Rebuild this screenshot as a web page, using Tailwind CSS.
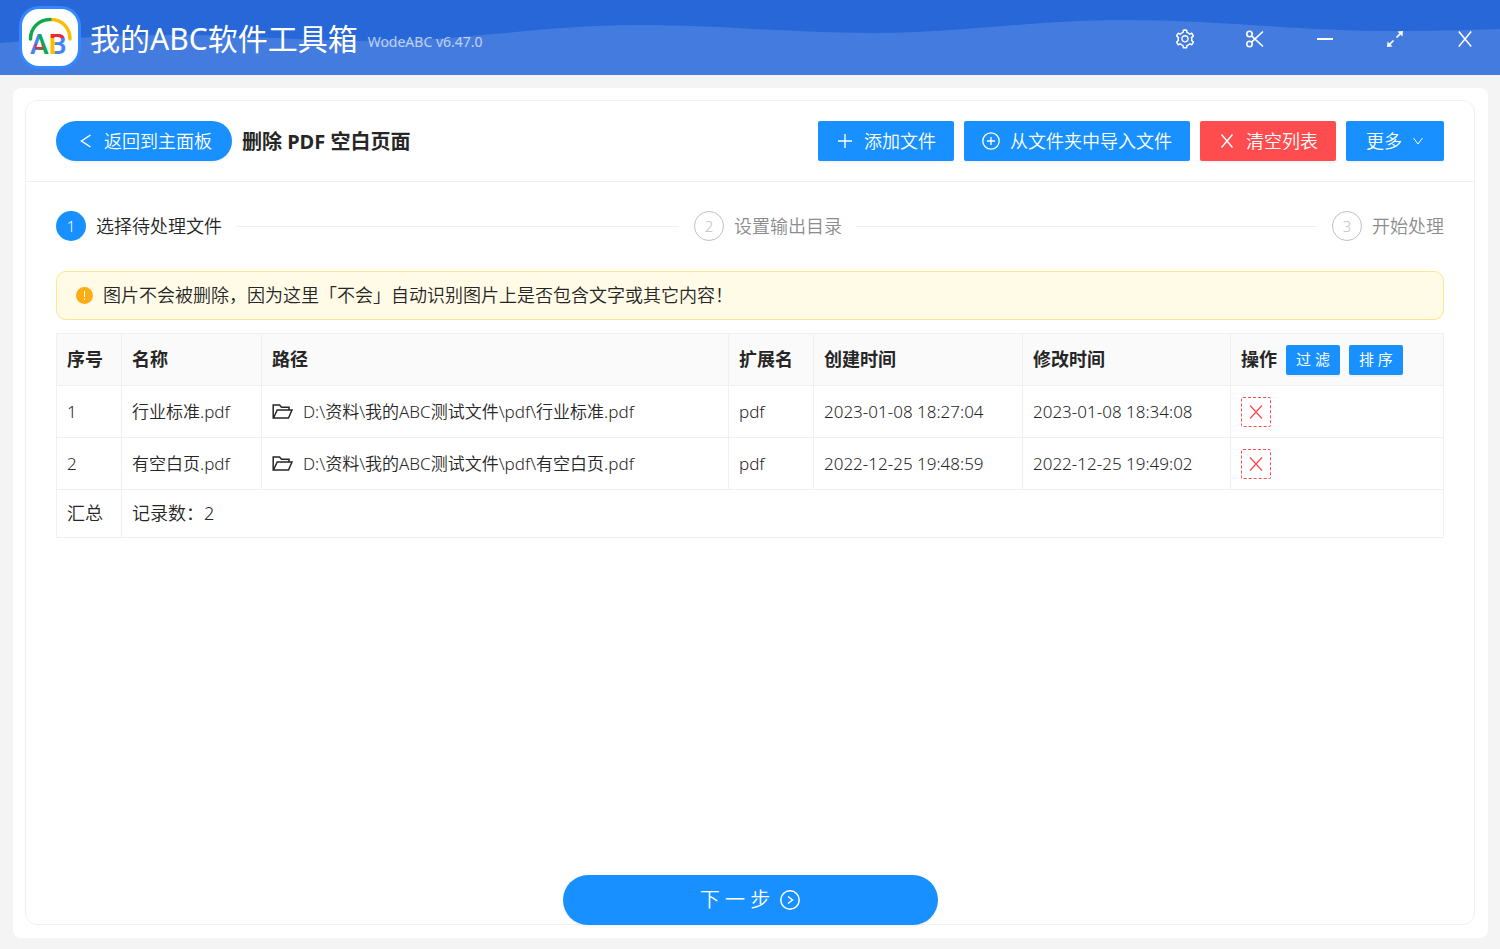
<!DOCTYPE html>
<html lang="zh-CN">
<head>
  <meta charset="UTF-8">
  <meta name="viewport" content="width=device-width, initial-scale=1.0">
  <title>我的ABC软件工具箱</title>
  <script src="https://cdn.jsdelivr.net/npm/@tailwindcss/browser@4"></script>
  <style>
    body { font-family: "Noto Sans", "Noto Sans CJK SC", sans-serif; }
  </style>
</head>
<body class="flex min-h-screen flex-col bg-[#f4f4f4] text-[17px] font-[350] text-[#262626]">

  <!-- Title bar -->
  <header class="relative flex h-[75px] items-center bg-[#2767d7] pl-[19px] text-white">
    <svg class="absolute inset-0 h-full w-full" viewBox="0 0 1500 75" preserveAspectRatio="none" aria-hidden="true">
      <path d="M0 43C70 38 110 35 170 35C250 35 300 41 370 41C470 41 540 25 637 25C720 25 790 33 873 33C960 33 1030 20 1125 20C1220 20 1300 31 1393 31C1430 31 1465 30 1500 29V75H0Z" fill="#447bde"/>
    </svg>
    <div class="relative flex flex-1 items-center">
      <svg class="h-[63px] w-[62px]" viewBox="0 0 62 63" aria-hidden="true">
        <defs>
          <pattern id="logoColors" width="62" height="63" patternUnits="userSpaceOnUse">
            <rect width="20" height="63" fill="#4285f4"/>
            <rect x="20" width="10" height="63" fill="#0aa84f"/>
            <rect x="16" y="38" width="8" height="5" fill="#ea2a33"/>
            <rect x="30" width="6" height="63" fill="#fbbc05"/>
            <rect x="36" width="26" height="63" fill="#4285f4"/>
            <rect x="30" width="32" height="32" fill="#ea2a33"/>
          </pattern>
        </defs>
        <rect width="62" height="63" rx="20" fill="#3388ff"/>
        <rect x="3" y="3" width="56" height="57" rx="17" fill="#fff"/>
        <g fill="none" stroke-width="3.500" stroke-linecap="round">
          <path d="M51 33C51 22 43 13.500 32 13.500" stroke="#fbbc05"/>
          <path d="M11.500 33C11.500 22 20 13.500 31 13.500" stroke="#0aa84f"/>
        </g>
        <text x="11" y="48" font-family="Roboto, sans-serif" font-size="28" font-weight="600" fill="url(#logoColors)">AB</text>
      </svg>
      <div class="flex items-center gap-[10px] pt-[3px] pl-[9px] font-normal">
        <h1 class="text-[30px] leading-10">我的ABC软件工具箱</h1>
        <span class="pt-1 text-[14px] text-white/65">WodeABC v6.47.0</span>
      </div>
    </div>
    <div class="relative flex h-full items-center pt-0.5">
      <button class="flex w-[70px] justify-center" aria-label="设置">
        <svg class="size-[22px]" viewBox="0 0 1024 1024" fill="currentColor"><path d="M924.800 625.700l-65.500-56c3.100-19 4.700-38.400 4.700-57.800s-1.600-38.800-4.700-57.800l65.500-56a32.030 32.030 0 009.300-35.200l-.9-2.600a443.740 443.740 0 00-79.700-137.900l-1.800-2.100a32.120 32.120 0 00-35.100-9.500l-81.300 28.900c-30-24.600-63.500-44-99.700-57.600l-15.700-85a32.050 32.050 0 00-25.800-25.700l-2.700-.5c-52.100-9.400-106.900-9.400-159 0l-2.700.5a32.050 32.050 0 00-25.800 25.700l-15.800 85.400a351.860 351.860 0 00-99 57.400l-81.900-29.100a32 32 0 00-35.100 9.500l-1.800 2.100a446.020 446.020 0 00-79.700 137.900l-.9 2.600c-4.500 12.500-.8 26.500 9.300 35.200l66.300 56.600c-3.100 18.800-4.600 38-4.600 57.100 0 19.200 1.500 38.400 4.600 57.100L99 625.500a32.030 32.030 0 00-9.300 35.200l.9 2.600c18.100 50.400 44.900 96.900 79.700 137.900l1.800 2.100a32.120 32.120 0 0035.100 9.500l81.900-29.100c29.800 24.500 63.100 43.900 99 57.400l15.800 85.400a32.050 32.050 0 0025.800 25.700l2.700.5a449.400 449.400 0 00159 0l2.700-.5a32.050 32.050 0 0025.800-25.700l15.700-85a350 350 0 0099.700-57.600l81.300 28.900a32 32 0 0035.100-9.500l1.800-2.100c34.800-41.100 61.600-87.500 79.700-137.900l.9-2.600c4.500-12.300.8-26.300-9.300-35zM788.300 465.900c2.500 15.100 3.800 30.600 3.800 46.100s-1.300 31-3.800 46.100l-6.600 40.100 74.700 63.900a370.030 370.030 0 01-42.600 73.600L721 702.800l-31.400 25.800c-23.900 19.600-50.500 35-79.300 45.800l-38.100 14.300-17.900 97a377.500 377.500 0 01-85 0l-17.900-97.200-37.800-14.500c-28.500-10.800-55-26.200-78.700-45.700l-31.400-25.900-93.400 33.200c-17-22.900-31.200-47.600-42.600-73.600l75.500-64.500-6.500-40c-2.400-14.900-3.700-30.300-3.700-45.500 0-15.300 1.200-30.600 3.700-45.500l6.500-40-75.500-64.500c11.300-26.100 25.600-50.700 42.600-73.600l93.400 33.200 31.400-25.900c23.700-19.500 50.200-34.900 78.700-45.700l37.900-14.300 17.900-97.200c28.100-3.200 56.800-3.200 85 0l17.900 97 38.100 14.300c28.700 10.800 55.400 26.200 79.300 45.800l31.400 25.800 92.800-32.900c17 22.900 31.200 47.600 42.600 73.600L781.800 426l6.500 39.900zM512 326c-97.200 0-176 78.800-176 176s78.800 176 176 176 176-78.800 176-176-78.800-176-176-176zm79.200 255.200A111.600 111.600 0 01512 614c-29.900 0-58-11.700-79.200-32.800A111.600 111.600 0 01400 502c0-29.900 11.700-58 32.800-79.200C454 401.600 482.100 390 512 390c29.900 0 58 11.600 79.200 32.800A111.600 111.600 0 01624 502c0 29.900-11.700 58-32.800 79.200z"/></svg>
      </button>
      <button class="flex w-[70px] justify-center" aria-label="截图">
        <svg class="size-5" viewBox="0 0 20 20" fill="none" stroke="currentColor" stroke-width="1.600"><circle cx="4.500" cy="5" r="2.700"/><circle cx="4.500" cy="15" r="2.700"/><path d="M6.500 13.200L18 2.500M6.500 6.800L18 17.500"/></svg>
      </button>
      <button class="flex w-[70px] justify-center" aria-label="最小化">
        <svg class="size-5" viewBox="0 0 20 20" fill="currentColor"><path d="M2 9h16v2H2z"/></svg>
      </button>
      <button class="flex w-[70px] justify-center" aria-label="最大化">
        <svg class="size-5" viewBox="0 0 20 20" fill="currentColor" stroke="currentColor" stroke-width="1.700"><path d="M11.500 8.500L16 4M8.500 11.500L4 16" fill="none"/><path d="M12.500 2.600L18 2L17.400 7.500ZM7.500 17.400L2 18L2.600 12.500Z" stroke="none"/></svg>
      </button>
      <button class="flex w-[70px] justify-center" aria-label="关闭">
        <svg class="size-5" viewBox="0 0 20 20" fill="none" stroke="currentColor" stroke-width="1.600"><path d="M3.800 2.500L16.200 17.500M16.200 2.500L3.800 17.500"/></svg>
      </button>
    </div>
  </header>

  <main class="mx-3 mt-[13px] mb-[11px] ml-[13px] flex flex-1 flex-col rounded-lg bg-white p-3 pr-[13px] pb-[13px]">
    <section class="flex flex-1 flex-col rounded-xl border border-[#f0f0f0]">

      <!-- Toolbar -->
      <div class="flex items-center gap-[10px] border-b border-[#f0f0f0] px-[30px] py-5">
        <button class="flex h-10 items-center gap-[10px] rounded-full bg-[#1890ff] px-5 text-[18px] text-white shadow-[0_2px_0_rgba(0,0,0,0.04)]">
          <svg class="size-[18px]" viewBox="0 0 18 18" fill="none" stroke="currentColor" stroke-width="1.500"><path d="M14.500 3L5.500 9L14.500 15"/></svg>
          返回到主面板
        </button>
        <h2 class="flex-1 pt-0.5 text-[20px] font-bold">删除 PDF 空白页面</h2>
        <button class="flex h-10 items-center gap-[10px] rounded-xs bg-[#1890ff] px-[18px] text-[18px] text-white shadow-[0_2px_0_rgba(0,0,0,0.04)]">
          <svg class="size-[18px]" viewBox="0 0 18 18" fill="none" stroke="currentColor" stroke-width="1.400"><path d="M9 2V16M2 9H16"/></svg>
          添加文件
        </button>
        <button class="flex h-10 items-center gap-[10px] rounded-xs bg-[#1890ff] px-[18px] text-[18px] text-white shadow-[0_2px_0_rgba(0,0,0,0.04)]">
          <svg class="size-[18px]" viewBox="0 0 18 18" fill="none" stroke="currentColor" stroke-width="1.300"><circle cx="9" cy="9" r="8.200"/><path d="M9 5V13M5 9H13"/></svg>
          从文件夹中导入文件
        </button>
        <button class="flex h-10 items-center gap-[10px] rounded-xs bg-[#ff4d4f] px-[18px] text-[18px] text-white shadow-[0_2px_0_rgba(0,0,0,0.04)]">
          <svg class="size-[18px]" viewBox="0 0 18 18" fill="none" stroke="currentColor" stroke-width="1.400"><path d="M3.500 2.500L14.500 15.500M14.500 2.500L3.500 15.500"/></svg>
          清空列表
        </button>
        <button class="flex h-10 items-center gap-[10px] rounded-xs bg-[#1890ff] px-5 text-[18px] text-white shadow-[0_2px_0_rgba(0,0,0,0.04)]">
          更多
          <svg class="size-3" viewBox="0 0 12 12" fill="none" stroke="currentColor"><path d="M1.500 3L6 9L10.500 3"/></svg>
        </button>
      </div>

      <div class="px-[30px] pt-[29px]">
        <!-- Steps -->
        <ol class="flex gap-[15px] text-[18px] leading-[30px]">
          <li class="flex flex-1 items-center gap-[10px]">
            <span class="flex size-[30px] items-center justify-center rounded-full bg-[#1890ff] text-[15px] text-white">1</span>
            选择待处理文件
            <span class="ml-1 h-px flex-1 bg-[#f0f0f0]"></span>
          </li>
          <li class="flex flex-1 items-center gap-[10px] text-[#8c8c8c]">
            <span class="flex size-[30px] items-center justify-center rounded-full border border-[#bfbfbf] text-[15px] text-[#bfbfbf]">2</span>
            设置输出目录
            <span class="ml-1 h-px flex-1 bg-[#f0f0f0]"></span>
          </li>
          <li class="flex items-center gap-[10px] text-[#8c8c8c]">
            <span class="flex size-[30px] items-center justify-center rounded-full border border-[#bfbfbf] text-[15px] text-[#bfbfbf]">3</span>
            开始处理
          </li>
        </ol>

        <!-- Warning -->
        <div class="mt-[30px] flex h-[49px] items-center gap-[10px] rounded-[10px] border border-[#ffe58f] bg-[#fffbe6] px-[19px] text-[18px]" role="alert">
          <svg class="size-[17px]" viewBox="0 0 17 17"><circle cx="8.500" cy="8.500" r="8.500" fill="#faad14"/><path d="M8 4h1v6H8zM8 11.500h1v1.500H8z" fill="#fff"/></svg>
          图片不会被删除，因为这里「不会」自动识别图片上是否包含文字或其它内容！
        </div>

        <!-- File list -->
        <table class="mt-[13px] w-full table-fixed border-collapse text-left [&_td]:border [&_td]:border-[#f0f0f0] [&_td]:px-[10px] [&_th]:border [&_th]:border-[#f0f0f0] [&_th]:px-[10px]">
          <colgroup>
            <col class="w-[65px]">
            <col class="w-[140px]">
            <col>
            <col class="w-[85px]">
            <col class="w-[209px]">
            <col class="w-[208px]">
            <col class="w-[213px]">
          </colgroup>
          <thead>
            <tr class="h-[52px] bg-[#fafafa] text-[18px]">
              <th class="font-bold">序号</th>
              <th class="font-bold">名称</th>
              <th class="font-bold">路径</th>
              <th class="font-bold">扩展名</th>
              <th class="font-bold">创建时间</th>
              <th class="font-bold">修改时间</th>
              <th class="font-bold">
                <div class="flex items-center gap-[9px]">
                  操作
                  <button class="h-[30px] rounded-xs bg-[#1890ff] px-[10px] text-[15px] font-normal text-white shadow-[0_2px_0_rgba(0,0,0,0.04)]">过 滤</button>
                  <button class="h-[30px] rounded-xs bg-[#1890ff] px-[10px] text-[15px] font-normal text-white shadow-[0_2px_0_rgba(0,0,0,0.04)]">排 序</button>
                </div>
              </th>
            </tr>
          </thead>
          <tbody>
            <tr class="h-[52px]">
              <td>1</td>
              <td>行业标准.pdf</td>
              <td>
                <div class="flex items-center gap-[10px]">
                  <svg class="size-[21px]" viewBox="0 0 21 21" fill="none" stroke="currentColor" stroke-width="1.500"><path d="M4 17H1.200V4H7.500L9.500 6.200H17V9M1.500 17L5.200 9H20L16.500 17Z"/></svg>
                  D:\资料\我的ABC测试文件\pdf\行业标准.pdf
                </div>
              </td>
              <td>pdf</td>
              <td>2023-01-08 18:27:04</td>
              <td>2023-01-08 18:34:08</td>
              <td>
                <button class="flex size-[30px] items-center justify-center rounded-xs border border-dashed border-[#ff4d4f] text-[#ff4d4f]" aria-label="删除">
                  <svg class="size-4" viewBox="0 0 16 16" fill="none" stroke="currentColor" stroke-width="1.300"><path d="M2 1.500L14 14.500M14 1.500L2 14.500"/></svg>
                </button>
              </td>
            </tr>
            <tr class="h-[52px]">
              <td>2</td>
              <td>有空白页.pdf</td>
              <td>
                <div class="flex items-center gap-[10px]">
                  <svg class="size-[21px]" viewBox="0 0 21 21" fill="none" stroke="currentColor" stroke-width="1.500"><path d="M4 17H1.200V4H7.500L9.500 6.200H17V9M1.500 17L5.200 9H20L16.500 17Z"/></svg>
                  D:\资料\我的ABC测试文件\pdf\有空白页.pdf
                </div>
              </td>
              <td>pdf</td>
              <td>2022-12-25 19:48:59</td>
              <td>2022-12-25 19:49:02</td>
              <td>
                <button class="flex size-[30px] items-center justify-center rounded-xs border border-dashed border-[#ff4d4f] text-[#ff4d4f]" aria-label="删除">
                  <svg class="size-4" viewBox="0 0 16 16" fill="none" stroke="currentColor" stroke-width="1.300"><path d="M2 1.500L14 14.500M14 1.500L2 14.500"/></svg>
                </button>
              </td>
            </tr>
          </tbody>
          <tfoot>
            <tr class="h-12 text-[18px]">
              <td>汇总</td>
              <td colspan="6">记录数：2</td>
            </tr>
          </tfoot>
        </table>
      </div>

      <button class="mx-auto mt-auto -mb-px flex h-[50px] w-[25vw] items-center justify-center gap-[10px] rounded-full bg-[#1890ff] text-[20px] text-white shadow-[0_2px_0_rgba(0,0,0,0.04)]">
        下 一 步
        <svg class="size-5" viewBox="0 0 20 20" fill="none" stroke="currentColor" stroke-width="1.500"><circle cx="10" cy="10" r="9.200"/><path d="M8 6.500L12.500 10L8 13.500"/></svg>
      </button>
    </section>
  </main>
</body>
</html>
